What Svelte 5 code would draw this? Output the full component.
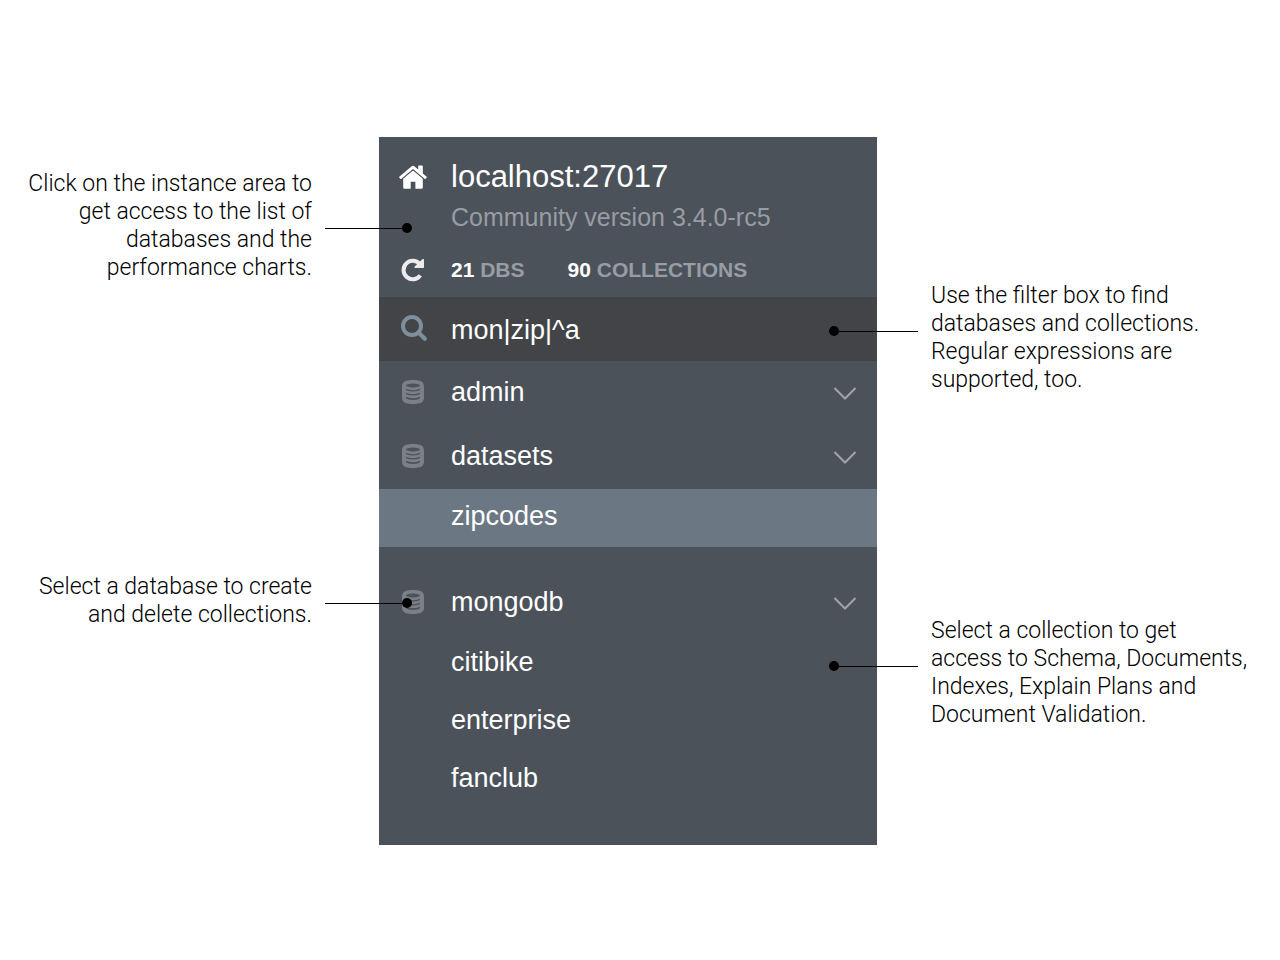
<script>
  let filter = $state('mon|zip|^a');
  let selected = $state('zipcodes');

  const databases = [
    { name: 'admin', collections: [] },
    { name: 'datasets', collections: ['zipcodes'] },
    { name: 'mongodb', collections: ['citibike', 'enterprise', 'fanclub'] }
  ];

  const leftNotes = [
    'Click on the instance area to\nget access to the list of\ndatabases and the\nperformance charts.',
    'Select a database to create\nand delete collections.'
  ];
  const rightNotes = [
    'Use the filter box to find\ndatabases and collections.\nRegular expressions are\nsupported, too.',
    'Select a collection to get\naccess to Schema, Documents,\nIndexes, Explain Plans and\nDocument Validation.'
  ];
</script>

{#snippet databaseIcon()}
  <svg class="db-icon" width="22" height="24" viewBox="0 0 22 24" aria-hidden="true">
    <path class="body" d="M0 6.5C0 2 3 0 11 0s11 2 11 6.5v11c0 4.5-3 6.5-11 6.500S0 22 0 17.500z" />
    <ellipse cx="11" cy="5.5" rx="7" ry="1.9" />
    <path d="M4 8.700c3 1.900 11 1.900 14 0v1.100c-1 2.200-13 2.200-14 0zM4 12.700c3 1.900 11 1.900 14 0v1.100c-1 2.200-13 2.200-14 0zM4 16.700c3 1.900 11 1.900 14 0v1.300c-1 2.600-13 2.600-14 0z" />
  </svg>
{/snippet}

<main>
  <section class="notes left">
    {#each leftNotes as note}
      <div class="note">
        <p>{note}</p>
        <div class="connector"><i class="line"></i><i class="dot"></i></div>
      </div>
    {/each}
  </section>

  <aside class="sidebar">
    <header>
      <button class="instance" aria-label="Instance home">
        <svg width="28" height="24" viewBox="0 0 28 24" aria-hidden="true">
          <path fill="#fff" d="M14 5.3 23.8 13.6V22.4a1.3 1.3 0 0 1-1.3 1.3H16.4V16.8H11.7V23.7H5.5a1.3 1.3 0 0 1-1.3-1.3V13.6z" />
          <path fill="#fff" stroke="#4c525a" stroke-width="2" paint-order="stroke" d="M12.7 1.2a2 2 0 0 1 2.6 0L19.2 4.5V1.3c0-.4.3-.7.7-.7h3.2c.4 0 .7.3.7.7v7.1l3.9 3.3c.3.3.3.6.1.9l-1.1 1.2c-.2.3-.6.3-.9.1L14 4 2.2 13.9c-.3.2-.7.2-.9-.1L.2 12.6c-.2-.3-.2-.6.1-.9z" />
        </svg>
      </button>
      <h1>localhost:27017</h1>
      <p class="version">Community version 3.4.0-rc5</p>
      <button class="refresh" aria-label="Refresh">
        <svg width="24" height="24" viewBox="0 0 24 24" aria-hidden="true">
          <path d="M19.3 17.3A9.2 9.2 0 1 1 18.7 6" fill="none" stroke="#ececee" stroke-width="4" />
          <path d="M23 1.9v7.2c0 .6-.4 1-1 1h-7.6c-.9 0-1.3-1-.7-1.600l7.600-7.300c.6-.6 1.700-.2 1.700.7z" fill="#ececee" />
        </svg>
      </button>
      <p class="stats">
        <span><b>21</b> DBS</span>
        <span><b>90</b> COLLECTIONS</span>
      </p>
    </header>

    <label class="filter">
      <svg width="28" height="28" viewBox="0 0 28 28" aria-hidden="true">
        <circle cx="12" cy="11" r="9" fill="none" stroke="#7f8e9c" stroke-width="4" />
        <path d="m18.5 17.5 6.3 6.3" stroke="#7f8e9c" stroke-width="4.2" stroke-linecap="round" />
      </svg>
      <input type="text" aria-label="Filter" spellcheck="false" bind:value={filter} />
    </label>

    <nav>
      {#each databases as db}
        <div class="group">
          <div class="database">
            {@render databaseIcon()}
            <button class="name">{db.name}</button>
            <button class="toggle" aria-label="Toggle {db.name}">
              <svg width="24" height="14" viewBox="0 0 24 14" aria-hidden="true">
                <path d="M1.5 2 12 12.5 22.5 2" fill="none" stroke="#a0a4ab" stroke-width="2" />
              </svg>
            </button>
          </div>
          {#each db.collections as name}
            <button class="collection" class:active={selected === name} onclick={() => (selected = name)}>{name}</button>
          {/each}
        </div>
      {/each}
    </nav>
  </aside>

  <section class="notes right">
    {#each rightNotes as note}
      <div class="note">
        <div class="connector"><i class="dot"></i><i class="line"></i></div>
        <p>{note}</p>
      </div>
    {/each}
  </section>
</main>

<style>
  :global(body) {
    background: #fff;
  }
  main {
    display: grid;
    grid-template-columns: 379fr 498fr 403fr;
    padding: 137px 0 115px;
    font-family: 'Liberation Sans', Arial, sans-serif;
  }
  p,
  h1 {
    margin: 0;
  }
  button,
  input {
    margin: 0;
    padding: 0;
    border: 0;
    background: none;
    color: inherit;
    font: inherit;
    text-align: left;
  }
  button {
    cursor: pointer;
  }
  svg {
    display: block;
  }

  .sidebar {
    background: #4c525a;
    color: #fff;
    font-size: 27px;
    padding-bottom: 36px;
  }
  header {
    display: grid;
    grid-template-columns: 72px 1fr;
    grid-template-rows: 40px 40px 66px;
    align-items: center;
    height: 140px;
    padding-top: 20px;
  }
  .instance,
  .refresh {
    display: flex;
    justify-content: center;
    width: 68px;
  }
  h1 {
    font-size: 31px;
    font-weight: 400;
    line-height: 40px;
  }
  .version {
    grid-column: 2;
    color: #989ca4;
    font-size: 25px;
    line-height: 40px;
  }
  .stats {
    display: flex;
    gap: 43px;
    color: #989ca4;
    font-size: 21px;
    font-weight: 700;
    line-height: 40px;
  }
  .stats b {
    color: #fff;
  }

  .filter {
    display: flex;
    align-items: center;
    height: 64px;
    background: #424448;
  }
  .filter svg {
    margin: 0 23px 0 21px;
  }
  .filter input {
    flex: 1;
    min-width: 0;
    height: 62px;
    padding-top: 2px;
    outline: none;
  }

  .group:nth-child(2) {
    padding-bottom: 24px;
  }
  .database {
    display: flex;
    align-items: center;
    height: 64px;
    padding-bottom: 2px;
    box-sizing: border-box;
  }
  .db-icon {
    margin: 0 27px 0 23px;
    fill: #4c525a;
  }
  .db-icon .body {
    fill: #7b7f88;
  }
  .name {
    flex: 1;
  }
  .toggle {
    padding: 2px 20px 0;
  }
  .collection {
    display: block;
    width: 100%;
    height: 58px;
    padding: 0 0 4px 72px;
  }
  .collection.active {
    background: #6b7884;
  }

  .notes {
    position: relative;
    display: flex;
    flex-direction: column;
    color: #000;
    font-family: Roboto, sans-serif;
    font-size: 23px;
    font-weight: 300;
    line-height: 28px;
  }
  .note {
    display: flex;
    align-items: center;
    gap: 13px;
    white-space: pre;
  }
  .left {
    align-items: flex-end;
    gap: 291px;
    padding-top: 33px;
    text-align: right;
  }
  .right {
    align-items: flex-start;
    gap: 223px;
    padding-top: 145px;
  }
  .connector {
    display: flex;
    align-items: center;
  }
  .left .connector {
    width: 87px;
    margin-right: -33px;
    padding-top: 4px;
  }
  .right .connector {
    width: 89px;
    margin-left: -48px;
    padding-bottom: 14px;
  }
  .line {
    flex: 1;
    height: 1px;
    background: #000;
  }
  .dot {
    width: 10px;
    height: 10px;
    border-radius: 50%;
    background: #000;
  }
</style>
